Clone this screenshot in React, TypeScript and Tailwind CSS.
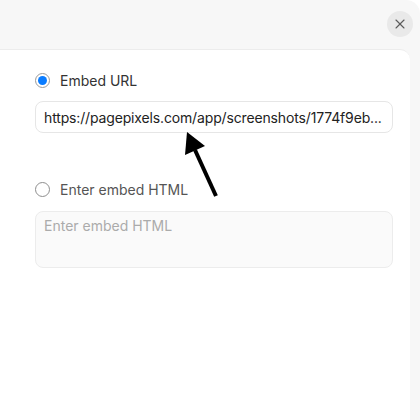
import { X } from "lucide-react";

function Radio({ checked }: { checked: boolean }) {
  return (
    <span
      className={
        checked
          ? "flex h-[15px] w-[15px] items-center justify-center rounded-full border border-[#9a9a9a] bg-white"
          : "flex h-[15px] w-[15px] items-center justify-center rounded-full border border-[#8e8e8e] bg-white"
      }
    >
      {checked && <span className="h-[9px] w-[9px] rounded-full bg-[#0a7cff]" />}
    </span>
  );
}

export default function App() {
  return (
    <div
      className="relative h-[420px] w-[420px] overflow-hidden bg-white"
      style={{ fontFamily: "Inter, 'Noto Sans', sans-serif" }}
    >
      <div className="flex h-full w-full flex-col rounded-tr-[14px] bg-[#f7f7f7]">
        <div className="flex h-[49px] shrink-0 items-start justify-end pr-[7px] pt-[11px]">
          <button className="flex h-[26px] w-[26px] items-center justify-center rounded-full bg-[#e9e9e9] text-[#5a5a5a]">
            <X size={16} strokeWidth={1.6} />
          </button>
        </div>
        <div className="-ml-4 mr-[10px] flex-1 rounded-tr-[10px] border-t border-[#ececec] bg-white pl-[51px] pr-[17px] pt-[20px]">
          <label className="flex items-center gap-[10px]">
            <Radio checked />
            <span className="text-[14px] text-[#333]">Embed URL</span>
          </label>
          <div className="mt-[10px] flex h-[32px] items-center rounded-[8px] border border-[#e6e6e6] px-[8px]">
            <span className="truncate text-[14px] tracking-[-0.15px] text-[#222]">
              https://pagepixels.com/app/screenshots/1774f9eb...
            </span>
          </div>
          <label className="mt-[46px] flex items-center gap-[10px]">
            <Radio checked={false} />
            <span className="text-[14px] text-[#555]">Enter embed HTML</span>
          </label>
          <div className="mt-[11px] h-[57px] rounded-[8px] border border-[#ececec] bg-[#fafafa] px-[8px] pt-[1px]">
            <span className="text-[14px] text-[#ababab]">Enter embed HTML</span>
          </div>
        </div>
      </div>
      <svg
        className="pointer-events-none absolute left-0 top-0"
        width="420"
        height="420"
        viewBox="0 0 420 420"
      >
        <line x1="216" y1="196" x2="195" y2="150" stroke="#000" strokeWidth="4" />
        <polygon points="187,132 185,155 205,146" fill="#000" />
      </svg>
    </div>
  );
}
